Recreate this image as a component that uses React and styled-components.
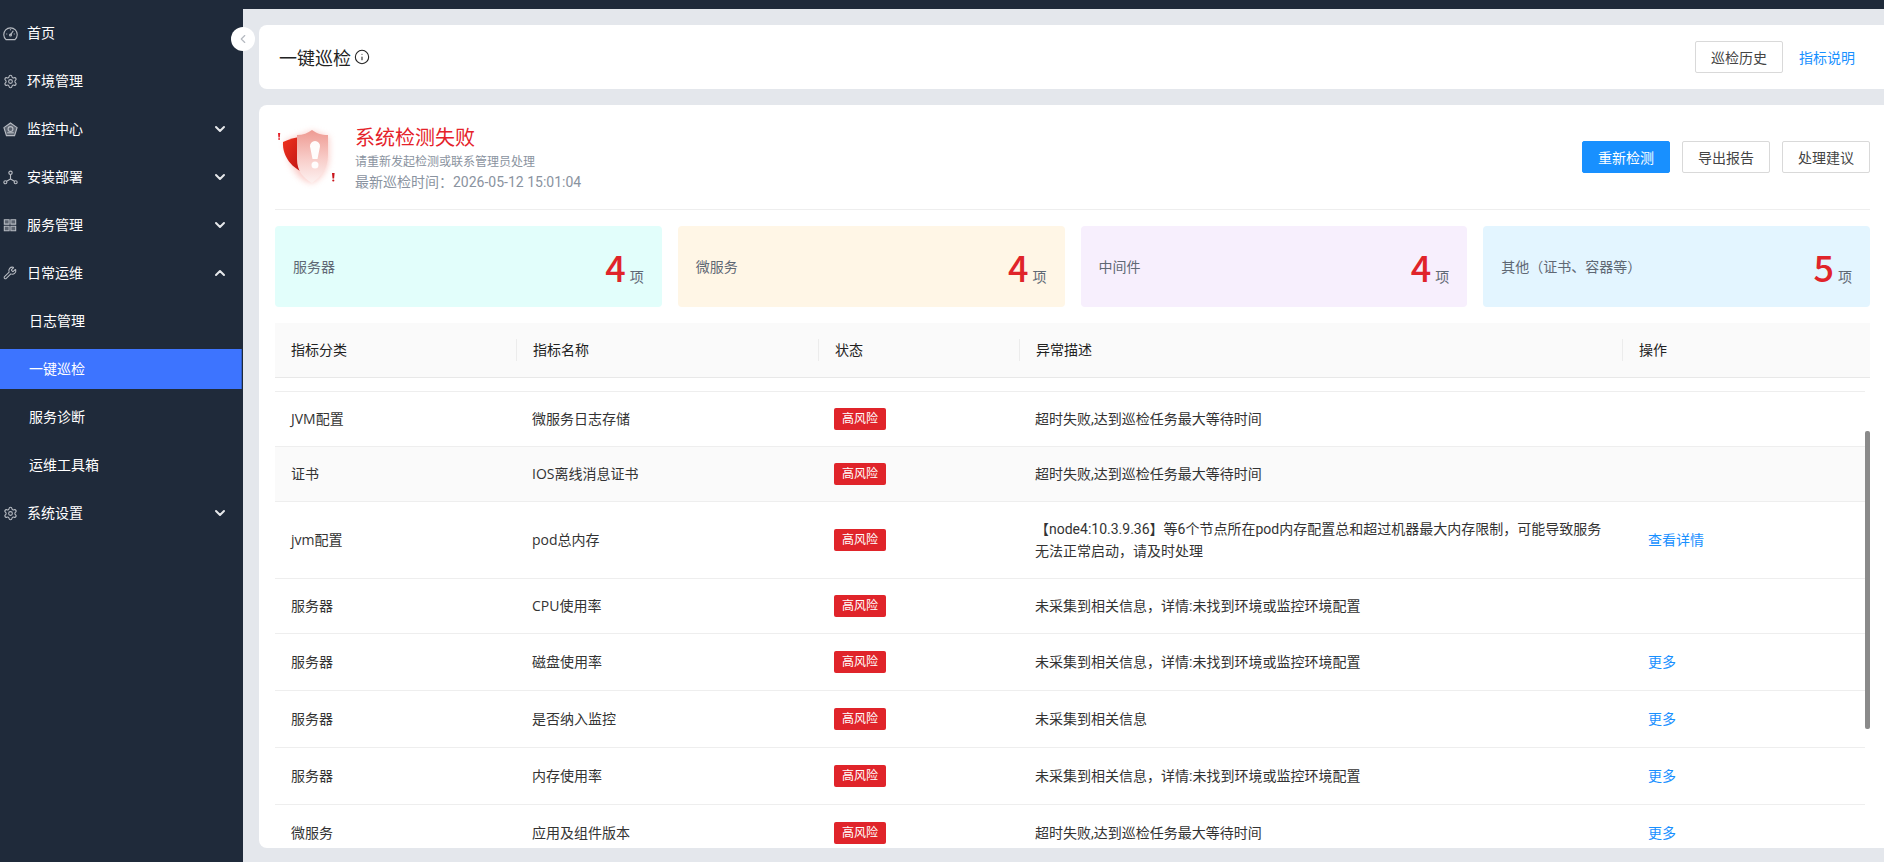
import React from "react";
import styled, { createGlobalStyle } from "styled-components";
import { ChevronDown, ChevronLeft, ChevronUp, Info, Settings, Wrench } from "lucide-react";

const GlobalStyle = createGlobalStyle`
  html, body {
    margin: 0;
    padding: 0;
    height: 100%;
    overflow: hidden;
  }
  body {
    font-family: "Open Sans", "Noto Sans CJK SC", sans-serif;
    font-size: 14px;
    color: #333;
    background: #e4e7ec;
  }
  * {
    box-sizing: border-box;
  }
`;

const Layout = styled.div`
  height: 862px;
  display: flex;
  flex-direction: column;
`;

const TopStrip = styled.div`
  height: 9px;
  background: #1f2a3a;
  flex-shrink: 0;
`;

const Body = styled.div`
  flex: 1;
  display: flex;
  min-height: 0;
`;

const Sidebar = styled.aside`
  width: 243px;
  flex-shrink: 0;
  background: #1f2a3a;
  position: relative;
  display: flex;
  flex-direction: column;
`;

const Collapse = styled.div`
  position: absolute;
  right: -12px;
  top: 18px;
  width: 24px;
  height: 24px;
  border-radius: 50%;
  background: #fff;
  color: #b5b9c0;
  display: flex;
  align-items: center;
  justify-content: center;
  z-index: 2;
`;

const MenuItem = styled.div`
  height: 40px;
  margin: 4px ${(p) => (p.$active ? "1px" : "0")} 4px 0;
  flex-shrink: 0;
  display: flex;
  align-items: center;
  padding-left: ${(p) => (p.$sub ? "29px" : "3px")};
  padding-right: 15px;
  color: #fff;
  background: ${(p) => (p.$active ? "#3d74ff" : "transparent")};
  border-right: ${(p) => (p.$active ? "1px solid #2f5ec9" : "none")};
`;

const IconSlot = styled.span`
  width: 14px;
  height: 14px;
  margin-right: 10px;
  flex-shrink: 0;
  display: flex;
  align-items: center;
  justify-content: center;
  color: #b8bcc3;
`;

const MenuLabel = styled.span`
  flex: 1;
  line-height: 20px;
`;

const Caret = styled.span`
  display: flex;
  color: #e6e8eb;
`;

const Main = styled.main`
  flex: 1;
  min-width: 0;
  padding: 16px 0 14px 16px;
  display: flex;
  flex-direction: column;
  gap: 16px;
`;

const Card = styled.section`
  background: #fff;
  border-radius: 8px 0 0 8px;
  padding: 0 14px 0 16px;
`;

const HeadCard = styled(Card)`
  height: 64px;
  display: flex;
  align-items: center;
  justify-content: space-between;
  flex-shrink: 0;
  padding-left: 20px;
`;

const PageTitle = styled.h1`
  margin: 0;
  font-size: 18px;
  font-weight: 400;
  color: #222;
  display: flex;
  align-items: center;
  gap: 3px;
`;

const Actions = styled.div`
  display: flex;
  align-items: center;
  gap: ${(p) => p.$gap || 12}px;
`;

const Button = styled.button`
  width: 88px;
  height: 32px;
  padding: 0;
  border-radius: 2px;
  border: 1px solid ${(p) => (p.$primary ? "#1890ff" : "#d9d9d9")};
  background: ${(p) => (p.$primary ? "#1890ff" : "#fff")};
  color: ${(p) => (p.$primary ? "#fff" : "#444")};
  font: inherit;
`;

const LinkButton = styled(Button)`
  width: 86px;
  border-color: transparent;
  background: transparent;
  color: #1890ff;
`;

const ResultCard = styled(Card)`
  flex: 1;
  min-height: 0;
  overflow: hidden;
  display: flex;
  flex-direction: column;
`;

const Summary = styled.div`
  height: 105px;
  flex-shrink: 0;
  display: flex;
  align-items: center;
  justify-content: space-between;
  border-bottom: 1px solid #eee;
`;

const SummaryLeft = styled.div`
  display: flex;
  align-items: center;
  padding-left: 1px;
`;

const Shield = styled.svg`
  width: 64px;
  height: 64px;
  margin-right: 15px;
  flex-shrink: 0;
`;

const SummaryText = styled.div`
  display: flex;
  flex-direction: column;
  padding-top: 2px;
`;

const FailTitle = styled.div`
  font-size: 20px;
  line-height: 28px;
  color: #e5222a;
`;

const Hint = styled.div`
  font-size: 12px;
  line-height: 20px;
  color: #8a93a0;
`;

const Checked = styled.div`
  font-family: Roboto, "Noto Sans CJK SC", sans-serif;
  font-size: 14px;
  line-height: 20px;
  color: #8a93a0;
`;

const Stats = styled.div`
  display: grid;
  grid-template-columns: repeat(4, 1fr);
  gap: 16px;
  margin: 16px 0;
  flex-shrink: 0;
`;

const Stat = styled.div`
  height: 81px;
  border-radius: 4px;
  background: ${(p) => p.$bg};
  padding: 0 18px 2px;
  display: flex;
  align-items: center;
  justify-content: space-between;
  color: #5f6874;
`;

const StatValue = styled.div`
  display: flex;
  align-items: baseline;
  gap: 4px;
`;

const StatNumber = styled.span`
  font-family: "Noto Sans CJK SC", sans-serif;
  font-size: 36px;
  line-height: 40px;
  font-weight: 500;
  color: #e0242a;
`;

const Table = styled.div`
  flex: 1;
  min-height: 0;
  display: flex;
  flex-direction: column;
  position: relative;
  overflow: hidden;
`;

const columns = "241px 302px 201px 603px 1fr";

const HeadRow = styled.div`
  height: 55px;
  flex-shrink: 0;
  display: grid;
  grid-template-columns: ${columns};
  align-items: center;
  background: #fafafa;
  border-bottom: 1px solid #e8e8e8;
  color: #222;
`;

const HeadCell = styled.div`
  height: 22px;
  line-height: 22px;
  padding-left: 16px;
  border-left: ${(p) => (p.$first ? "none" : "1px solid #ececec")};
`;

const Rows = styled.div`
  flex: 1;
  min-height: 0;
  padding-right: 5px;
`;

const ScrolledGap = styled.div`
  height: 14px;
  border-bottom: 1px solid #eee;
`;

const Row = styled.div`
  height: ${(p) => p.$height}px;
  display: grid;
  grid-template-columns: ${columns};
  align-items: center;
  border-bottom: 1px solid #eee;
  background: ${(p) => (p.$shaded ? "#fafafa" : "#fff")};
  color: #333;
`;

const Cell = styled.div`
  padding-left: 16px;
  line-height: 22px;
`;

const DescCell = styled(Cell)`
  font-family: Roboto, "Noto Sans CJK SC", sans-serif;
  padding-right: 16px;
`;

const ActionCell = styled(Cell)`
  padding-left: 26px;
`;

const Tag = styled.span`
  display: block;
  width: 52px;
  height: 22px;
  line-height: 22px;
  border-radius: 2px;
  background: #e0242a;
  color: #fff;
  font-size: 12px;
  text-align: center;
`;

const RowLink = styled.a`
  color: #1890ff;
`;

const ScrollThumb = styled.div`
  position: absolute;
  right: 0;
  top: 108px;
  width: 5px;
  height: 298px;
  border-radius: 2px;
  background: #8a8a8a;
`;

const GaugeIcon = () => (
  <svg width="15" height="15" viewBox="0 0 16 16" fill="none" stroke="currentColor" strokeWidth="1.2" style={{ flexShrink: 0 }}>
    <path d="M3.2 14.5a7.2 7.2 0 1 1 9.6 0z" />
    <path d="M8 9.500 11 5" />
    <circle cx="8" cy="9.600" r="1" />
    <path d="M3.500 8.500h1M11.500 8.500h1M8 3.500v1" />
  </svg>
);

const PentagonIcon = () => (
  <svg width="15" height="15" viewBox="0 0 16 16" fill="none" stroke="currentColor" strokeWidth="1.2" style={{ flexShrink: 0 }}>
    <path d="M8 1l7 5-2.700 8.500H3.700L1 6z" fill="currentColor" fillOpacity=".4" />
    <circle cx="8" cy="7.500" r="2.600" />
    <path d="M4.500 11.500h7" />
  </svg>
);

const NodesIcon = () => (
  <svg width="15" height="15" viewBox="0 0 16 16" fill="none" stroke="currentColor" strokeWidth="1.2" style={{ flexShrink: 0 }}>
    <circle cx="8" cy="3" r="1.800" />
    <circle cx="2.500" cy="13" r="1.600" />
    <circle cx="13.500" cy="13" r="1.600" />
    <path d="M8 5v4.500M8 9.500 3.800 12M8 9.500l4.200 2.500" />
  </svg>
);

const GridIcon = () => (
  <svg width="14" height="14" viewBox="0 0 16 16" fill="currentColor" fillOpacity=".4" stroke="currentColor" strokeWidth="1.2" style={{ flexShrink: 0 }}>
    <path d="M1.500 2h5.500v5H1.500zM9 2h5.500v5H9zM1.500 9.500h5.500v5H1.500zM9 9.500h5.500v5H9z" />
  </svg>
);

const ShieldIcon = () => (
  <Shield viewBox="0 0 64 64">
    <defs>
      <linearGradient id="backShield" x1="0" y1="0" x2="1" y2="1">
        <stop offset="0" stopColor="#f0341f" />
        <stop offset="1" stopColor="#b90f12" />
      </linearGradient>
      <linearGradient id="frontShield" x1="0" y1="0" x2="0" y2="1">
        <stop offset="0" stopColor="#ee9a92" />
        <stop offset=".55" stopColor="#f8cdc9" />
        <stop offset="1" stopColor="#fdf2f1" />
      </linearGradient>
      <filter id="shieldGlow" x="-30%" y="-30%" width="160%" height="160%">
        <feGaussianBlur stdDeviation="3" />
      </filter>
    </defs>
    <path d="M9 16 36 6l17 6v20c0 12-8 22-17 26-12-2-24-14-27-42z" fill="#f7a9a2" opacity=".6" filter="url(#shieldGlow)" />
    <path d="M7 17c6-3 14-5 22-6v37C17 44 6 32 7 17z" fill="url(#backShield)" />
    <path d="M21 10c6 0 11-2 15-5 4 3 9 5 16 5v20c0 13-7 22-16 28-9-5-15-12-15-24z" fill="url(#frontShield)" />
    <path d="M39 16a5 5 0 0 1 5 5.500L41.500 34h-5L34 21.500a5 5 0 0 1 5-5.500z" fill="#fff" opacity=".95" />
    <circle cx="39" cy="40" r="3.500" fill="#fff" opacity=".95" />
    <path d="M2 8h2.200l-.4 4.500H2.400z" fill="#e5222a" />
    <circle cx="3.100" cy="14" r=".9" fill="#e5222a" />
    <path d="M56 48h2.600l-.5 5.500h-1.600z" fill="#c9151b" />
    <circle cx="57.300" cy="55.500" r="1.100" fill="#c9151b" />
  </Shield>
);

const menu = [
  { label: "首页", icon: <GaugeIcon /> },
  { label: "环境管理", icon: <Settings size={15} strokeWidth={1.7} style={{ flexShrink: 0 }} /> },
  { label: "监控中心", icon: <PentagonIcon />, caret: "down" },
  { label: "安装部署", icon: <NodesIcon />, caret: "down" },
  { label: "服务管理", icon: <GridIcon />, caret: "down" },
  { label: "日常运维", icon: <Wrench size={14} strokeWidth={1.8} />, caret: "up" },
  { label: "日志管理", sub: true },
  { label: "一键巡检", sub: true, active: true },
  { label: "服务诊断", sub: true },
  { label: "运维工具箱", sub: true },
  { label: "系统设置", icon: <Settings size={15} strokeWidth={1.7} style={{ flexShrink: 0 }} />, caret: "down" },
];

const stats = [
  { label: "服务器", value: 4, bg: "#e2fefb" },
  { label: "微服务", value: 4, bg: "#fff6e6" },
  { label: "中间件", value: 4, bg: "#f7effd" },
  { label: "其他（证书、容器等）", value: 5, bg: "#e3f5ff" },
];

const timeoutText = "超时失败,达到巡检任务最大等待时间";
const missingText = "未采集到相关信息，详情:未找到环境或监控环境配置";

const rows = [
  { type: "JVM配置", name: "微服务日志存储", desc: timeoutText, height: 55 },
  { type: "证书", name: "IOS离线消息证书", desc: timeoutText, height: 55, shaded: true },
  {
    type: "jvm配置",
    name: "pod总内存",
    desc: "【node4:10.3.9.36】等6个节点所在pod内存配置总和超过机器最大内存限制，可能导致服务无法正常启动，请及时处理",
    link: "查看详情",
    height: 77,
  },
  { type: "服务器", name: "CPU使用率", desc: missingText, height: 55 },
  { type: "服务器", name: "磁盘使用率", desc: missingText, link: "更多", height: 57 },
  { type: "服务器", name: "是否纳入监控", desc: "未采集到相关信息", link: "更多", height: 57 },
  { type: "服务器", name: "内存使用率", desc: missingText, link: "更多", height: 57 },
  { type: "微服务", name: "应用及组件版本", desc: timeoutText, link: "更多", height: 57 },
];

const App = () => {
  return (
    <>
      <GlobalStyle />
      <Layout>
        <TopStrip />
        <Body>
          <Sidebar>
            <Collapse>
              <ChevronLeft size={14} />
            </Collapse>
            {menu.map((item) => (
              <MenuItem key={item.label} $sub={item.sub} $active={item.active}>
                {item.icon && <IconSlot>{item.icon}</IconSlot>}
                <MenuLabel>{item.label}</MenuLabel>
                {item.caret && (
                  <Caret>
                    {item.caret === "up" ? <ChevronUp size={16} strokeWidth={3} /> : <ChevronDown size={16} strokeWidth={3} />}
                  </Caret>
                )}
              </MenuItem>
            ))}
          </Sidebar>
          <Main>
            <HeadCard>
              <PageTitle>
                一键巡检
                <Info size={16} strokeWidth={1.6} />
              </PageTitle>
              <Actions $gap={1}>
                <Button>巡检历史</Button>
                <LinkButton>指标说明</LinkButton>
              </Actions>
            </HeadCard>
            <ResultCard>
              <Summary>
                <SummaryLeft>
                  <ShieldIcon />
                  <SummaryText>
                    <FailTitle>系统检测失败</FailTitle>
                    <Hint>请重新发起检测或联系管理员处理</Hint>
                    <Checked>最新巡检时间：2026-05-12 15:01:04</Checked>
                  </SummaryText>
                </SummaryLeft>
                <Actions>
                  <Button $primary>重新检测</Button>
                  <Button>导出报告</Button>
                  <Button>处理建议</Button>
                </Actions>
              </Summary>
              <Stats>
                {stats.map((stat) => (
                  <Stat key={stat.label} $bg={stat.bg}>
                    <span>{stat.label}</span>
                    <StatValue>
                      <StatNumber>{stat.value}</StatNumber>
                      <span>项</span>
                    </StatValue>
                  </Stat>
                ))}
              </Stats>
              <Table>
                <HeadRow>
                  <HeadCell $first>指标分类</HeadCell>
                  <HeadCell>指标名称</HeadCell>
                  <HeadCell>状态</HeadCell>
                  <HeadCell>异常描述</HeadCell>
                  <HeadCell>操作</HeadCell>
                </HeadRow>
                <Rows>
                  <ScrolledGap />
                  {rows.map((row) => (
                    <Row key={row.name} $height={row.height} $shaded={row.shaded}>
                      <Cell>{row.type}</Cell>
                      <Cell>{row.name}</Cell>
                      <Cell>
                        <Tag>高风险</Tag>
                      </Cell>
                      <DescCell>{row.desc}</DescCell>
                      <ActionCell>{row.link && <RowLink>{row.link}</RowLink>}</ActionCell>
                    </Row>
                  ))}
                </Rows>
                <ScrollThumb />
              </Table>
            </ResultCard>
          </Main>
        </Body>
      </Layout>
    </>
  );
};

export default App;
